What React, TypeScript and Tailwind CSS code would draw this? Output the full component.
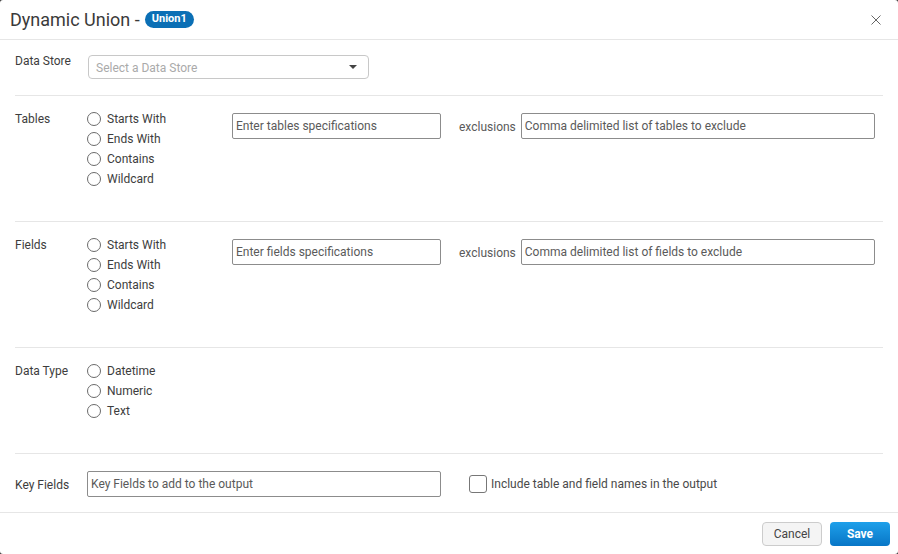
import React from "react";

const font = { fontFamily: "Roboto, 'Liberation Sans', sans-serif" };

function Radio({ label }: { label: string }) {
  return (
    <div className="flex h-[20px] items-center">
      <span className="box-border h-[14px] w-[14px] rounded-full border border-[#6b6b6b] bg-white" />
      <span className="ml-[6px] text-[12px] text-[#3d3d3d]">{label}</span>
    </div>
  );
}

function TextBox({ placeholder, w }: { placeholder: string; w: string }) {
  return (
    <div className={`flex h-[26px] items-center rounded-[2px] border border-[#8c8c8c] bg-white pl-[3px] text-[12px] text-[#5a5a5a] ${w}`}>
      {placeholder}
    </div>
  );
}

function PatternSection({ label, spec, excl }: { label: string; spec: string; excl: string }) {
  return (
    <div className="flex h-[126px] border-b border-[#e6e6e6] pt-[13px]">
      <div className="w-[72px] pt-[2px] text-[12px] leading-[16px] text-[#3d3d3d]">{label}</div>
      <div className="flex w-[145px] flex-col">
        <Radio label="Starts With" />
        <Radio label="Ends With" />
        <Radio label="Contains" />
        <Radio label="Wildcard" />
      </div>
      <div className="mt-[4px] flex items-start">
        <TextBox placeholder={spec} w="w-[209px]" />
        <span className="ml-[18px] mr-[5px] flex h-[26px] items-center pt-[1px] text-[12px] text-[#5a5a5a]">exclusions</span>
        <TextBox placeholder={excl} w="w-[354px]" />
      </div>
    </div>
  );
}

export default function App() {
  return (
    <div className="h-[554px] w-[898px] bg-[#3a3a3a]" style={font}>
      <div className="flex h-full w-full flex-col overflow-hidden rounded-[3px] bg-white">
        {/* header */}
        <div className="flex h-[40px] shrink-0 items-center border-b border-[#e6e6e6] pl-[10px] pr-[17px]">
          <span className="text-[18px] leading-[20px] text-[#3a3a3a]">Dynamic Union -</span>
          <span className="ml-[5px] flex h-[17px] items-center rounded-full bg-[#0b6fb5] px-[7px] text-[11px] font-bold text-white">
            Union1
          </span>
          <div className="flex-1" />
          <svg width="10" height="10" viewBox="0 0 10 10" className="mt-[1px]">
            <path d="M0.5 0.5 L9.5 9.5 M9.5 0.5 L0.5 9.5" stroke="#666" strokeWidth="1" />
          </svg>
        </div>

        {/* body */}
        <div className="flex-1 px-[15px]">
          {/* data store */}
          <div className="flex h-[56px] border-b border-[#e6e6e6] pt-[13px]">
            <div className="w-[73px] text-[12px] leading-[16px] text-[#3d3d3d]">Data Store</div>
            <div className="mt-[2px] flex h-[24px] w-[281px] items-center justify-between rounded-[4px] border border-[#c8c8c8] bg-white pl-[7px] pr-[11px] pt-[2px] text-[12px] text-[#aaa]">
              <span>Select a Data Store</span>
              <svg width="8" height="4" viewBox="0 0 8 4" className="-mt-[2px]">
                <path d="M0 0 L8 0 L4 4 Z" fill="#444" />
              </svg>
            </div>
          </div>

          <PatternSection
            label="Tables"
            spec="Enter tables specifications"
            excl="Comma delimited list of tables to exclude"
          />
          <PatternSection
            label="Fields"
            spec="Enter fields specifications"
            excl="Comma delimited list of fields to exclude"
          />

          {/* data type */}
          <div className="flex h-[106px] border-b border-[#e6e6e6] pt-[13px]">
            <div className="w-[72px] pt-[2px] text-[12px] leading-[16px] text-[#3d3d3d]">Data Type</div>
            <div className="flex flex-col">
              <Radio label="Datetime" />
              <Radio label="Numeric" />
              <Radio label="Text" />
            </div>
          </div>

          {/* key fields */}
          <div className="flex h-[58px] items-start pt-[17px]">
            <div className="w-[72px] pt-[6px] text-[12px] leading-[16px] text-[#3d3d3d]">Key Fields</div>
            <TextBox placeholder="Key Fields to add to the output" w="w-[354px]" />
            <div className="ml-[28px] flex h-[26px] items-center">
              <span className="box-border h-[18px] w-[18px] rounded-[3px] border border-[#777] bg-white" />
              <span className="ml-[4px] text-[12px] text-[#4a4a4a]">Include table and field names in the output</span>
            </div>
          </div>
        </div>

        {/* footer */}
        <div className="flex h-[42px] shrink-0 items-start justify-end gap-[8px] border-t border-[#e6e6e6] pr-[8px] pt-[9px]">
          <button className="flex h-[24px] w-[60px] items-center justify-center rounded-[4px] border border-[#ccc] bg-[#f4f4f4] text-[12px] text-[#444]">
            Cancel
          </button>
          <button className="flex h-[24px] w-[60px] items-center justify-center rounded-[4px] bg-gradient-to-b from-[#1ea0ea] to-[#0876c6] text-[12px] font-bold text-white">
            Save
          </button>
        </div>
      </div>
    </div>
  );
}
